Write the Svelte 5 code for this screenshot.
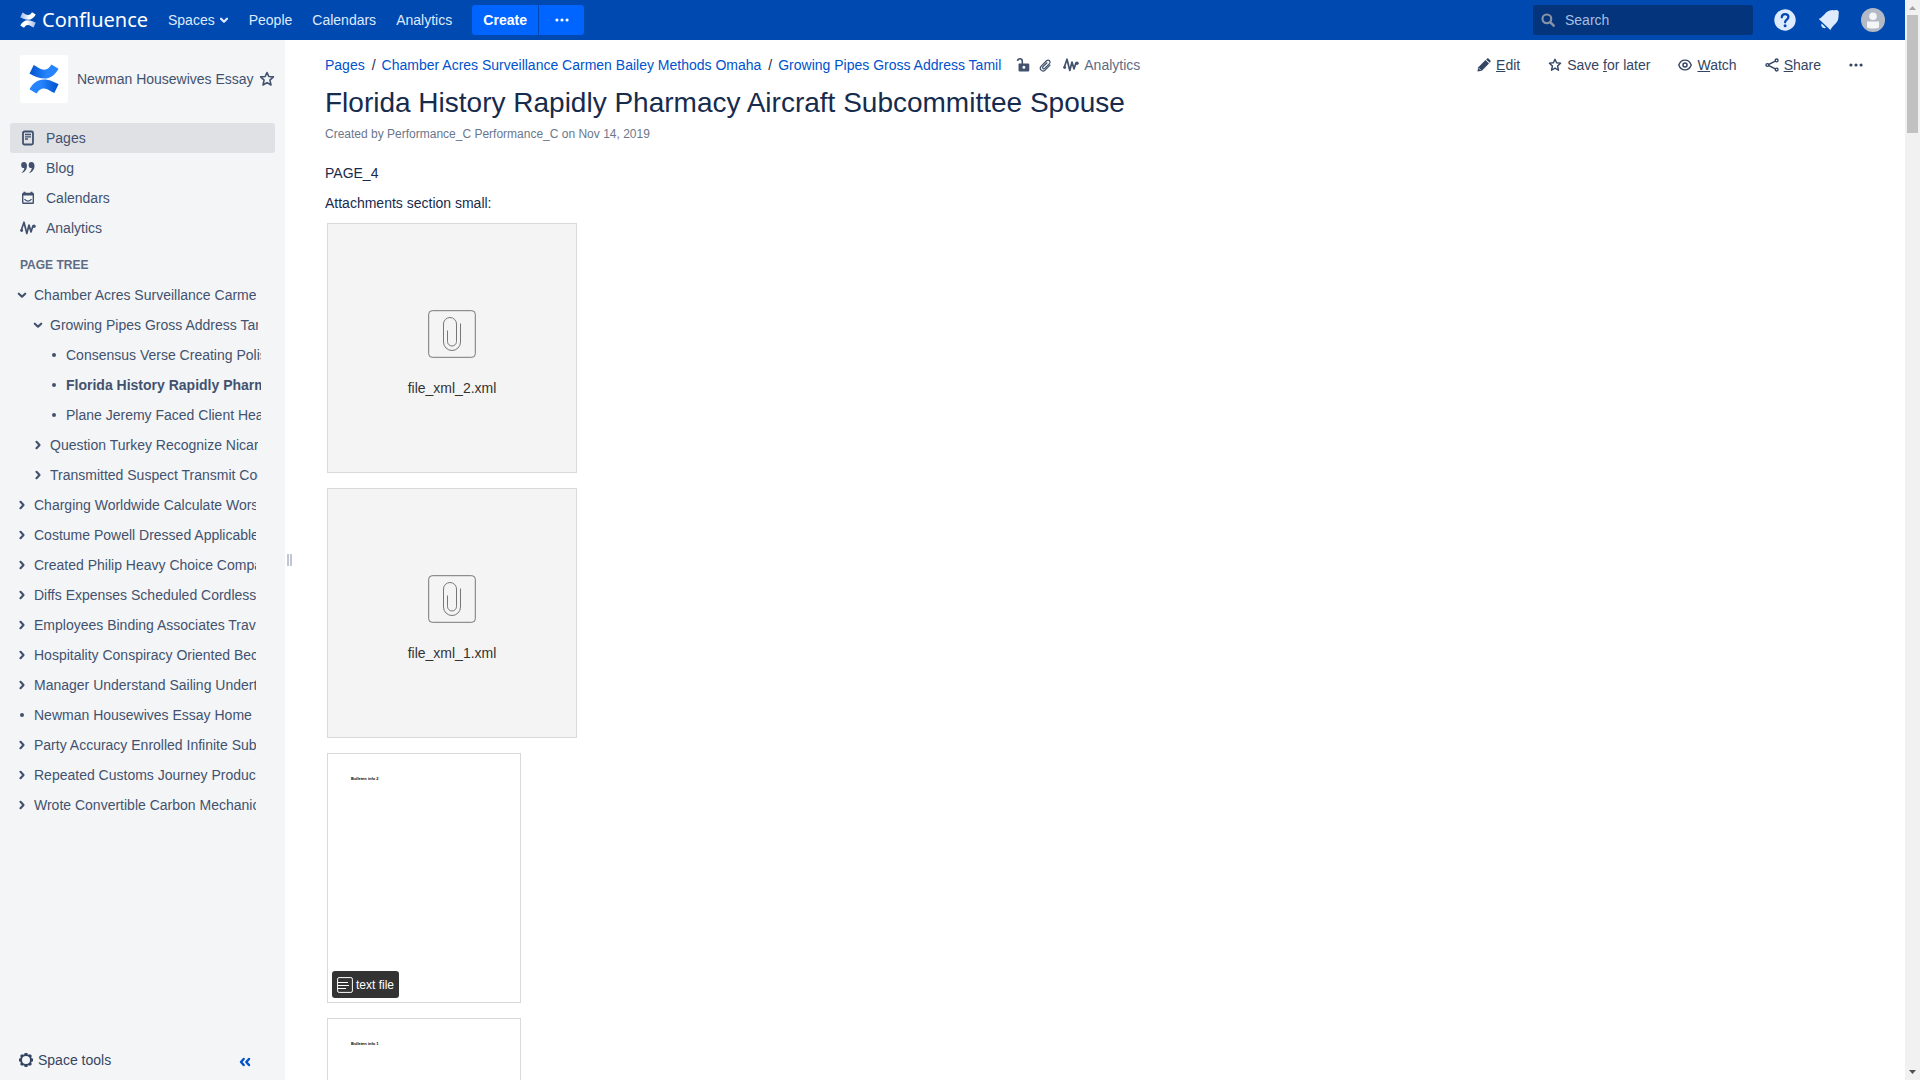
<script>
  const nav = [
    { label: 'Pages', icon: 'page', active: true },
    { label: 'Blog', icon: 'quote' },
    { label: 'Calendars', icon: 'calendar' },
    { label: 'Analytics', icon: 'wave' }
  ];

  const tree = [
    { level: 1, kind: 'open', text: 'Chamber Acres Surveillance Carmen Bailey Methods Omaha' },
    { level: 2, kind: 'open', text: 'Growing Pipes Gross Address Tamil' },
    { level: 3, kind: 'leaf', text: 'Consensus Verse Creating Polish' },
    { level: 3, kind: 'leaf', text: 'Florida History Rapidly Pharmacy Aircraft Subcommittee Spouse', current: true },
    { level: 3, kind: 'leaf', text: 'Plane Jeremy Faced Client Heat' },
    { level: 2, kind: 'closed', text: 'Question Turkey Recognize Nicaragua' },
    { level: 2, kind: 'closed', text: 'Transmitted Suspect Transmit Cooking' },
    { level: 1, kind: 'closed', text: 'Charging Worldwide Calculate Worst' },
    { level: 1, kind: 'closed', text: 'Costume Powell Dressed Applicable' },
    { level: 1, kind: 'closed', text: 'Created Philip Heavy Choice Company' },
    { level: 1, kind: 'closed', text: 'Diffs Expenses Scheduled Cordless' },
    { level: 1, kind: 'closed', text: 'Employees Binding Associates Travel' },
    { level: 1, kind: 'closed', text: 'Hospitality Conspiracy Oriented Beck' },
    { level: 1, kind: 'closed', text: 'Manager Understand Sailing Undertake' },
    { level: 1, kind: 'leaf', text: 'Newman Housewives Essay Home' },
    { level: 1, kind: 'closed', text: 'Party Accuracy Enrolled Infinite Subject' },
    { level: 1, kind: 'closed', text: 'Repeated Customs Journey Products' },
    { level: 1, kind: 'closed', text: 'Wrote Convertible Carbon Mechanics' }
  ];

  const crumbs = ['Pages', 'Chamber Acres Surveillance Carmen Bailey Methods Omaha', 'Growing Pipes Gross Address Tamil'];
  const files = ['file_xml_2.xml', 'file_xml_1.xml'];
  const previews = ['Bulleten info 2', 'Bulleten info 1'];
</script>

{#snippet icon(name)}
  <svg class="icon" viewBox="0 0 16 16" aria-hidden="true">
    {#if name === 'page'}
      <rect x="3" y="1.5" width="10" height="13" rx="1.5" fill="none" stroke="currentColor" stroke-width="1.8" />
      <path d="M5 4.5h6M5 6.8h6M5 9h3" stroke="currentColor" stroke-width="1.3" />
    {:else if name === 'quote'}
      <path d="M4 2a3 3 0 1 0 .3 6C4 10 3 11.700 1.300 13.200c3.400-.6 5.700-3.700 5.700-7.400C7 3.400 5.800 2 4 2zM11.500 2a3 3 0 1 0 .3 6c-.3 2-1.300 3.700-3 5.200 3.400-.6 5.700-3.700 5.700-7.400C14.500 3.400 13.300 2 11.500 2z" fill="currentColor" />
    {:else if name === 'calendar'}
      <rect x="2.700" y="3.500" width="10.600" height="9.800" rx=".6" fill="none" stroke="currentColor" stroke-width="1.400" />
      <path d="M2.500 4.500h11M4.500 1.800v2M11.500 1.800v2" stroke="currentColor" stroke-width="2" />
      <path d="M4.500 9c1.500 2.700 5.500 2.700 7 0" fill="none" stroke="currentColor" stroke-width="1.200" />
    {:else if name === 'wave'}
      <path d="M1.200 10.500L4 2.200l2.800 11.300L9 5l2 7 1.900-6" fill="none" stroke="currentColor" stroke-width="1.700" stroke-linejoin="round" stroke-linecap="round" />
      <circle cx="1.700" cy="10.500" r="1.400" fill="currentColor" /><circle cx="14" cy="6.300" r="1.700" fill="currentColor" />
    {:else if name === 'star'}
      <path d="M8 1.500l1.800 4 4.600.4-3.500 3.200 1.100 4.900L8 11.600 4 14l1.100-4.900L1.600 5.900l4.600-.4z" fill="none" stroke="currentColor" stroke-width="1.600" stroke-linejoin="round" />
    {:else if name === 'down'}
      <path d="M4.800 6.700L8 9.700l3.200-3" fill="none" stroke="currentColor" stroke-width="2.200" stroke-linecap="round" stroke-linejoin="round" />
    {:else if name === 'right'}
      <path d="M6.500 4.800L9.500 8l-3 3.200" fill="none" stroke="currentColor" stroke-width="2.200" stroke-linecap="round" stroke-linejoin="round" />
    {:else if name === 'dot'}
      <circle cx="8" cy="8" r="2" fill="currentColor" />
    {:else if name === 'more'}
      <circle cx="2.200" cy="8" r="1.800" fill="currentColor" /><circle cx="8" cy="8" r="1.800" fill="currentColor" /><circle cx="13.800" cy="8" r="1.800" fill="currentColor" />
    {:else if name === 'pencil'}
      <path d="M.5 15.500l1-5L9.700 2.300l4 4L5.500 14.500z" fill="currentColor" />
      <path d="M10.500 1.600l.8-.8c.8-.6 1.500-.5 2 0l1.900 1.900c.6.6.5 1.300 0 1.900l-.8.900z" fill="currentColor" />
      <path d="M2 11.500l2.500 2.500" stroke="#fff" stroke-width=".8" />
    {:else if name === 'eye'}
      <path d="M.9 8C2.300 4.200 4.900 2.400 8 2.400S13.700 4.200 15.100 8c-1.400 3.800-4 5.600-7.100 5.600S2.300 11.800.9 8z" fill="none" stroke="currentColor" stroke-width="1.600" />
      <circle cx="8" cy="8" r="2.300" fill="none" stroke="currentColor" stroke-width="1.700" />
    {:else if name === 'share'}
      <path d="M13 3L2.800 8 13 13" fill="none" stroke="currentColor" stroke-width="1.600" />
      <circle cx="13.300" cy="2.800" r="1.600" fill="#fff" stroke="currentColor" stroke-width="1.600" /><circle cx="2.700" cy="8" r="1.600" fill="#fff" stroke="currentColor" stroke-width="1.600" /><circle cx="13.300" cy="13.200" r="1.600" fill="#fff" stroke="currentColor" stroke-width="1.600" />
    {:else if name === 'lock'}
      <path fill-rule="evenodd" d="M4 6.500h9a1.300 1.300 0 0 1 1.300 1.300v5.400a1.300 1.300 0 0 1-1.300 1.300H4.800a1.300 1.300 0 0 1-1.300-1.300V7zM8.900 8.800a1.500 1.500 0 1 0 0 3 1.500 1.500 0 0 0 0-3z" fill="currentColor" />
      <path d="M2.500 4c.3-3 4.800-3.300 4.800.3v3" fill="none" stroke="currentColor" stroke-width="1.600" />
    {:else if name === 'clip'}
      <path d="M13 8.200l-4.800 4.900c-3 2.600-6.600-1-4-4l5.300-5.300c2.200-1.900 4.800.7 3 2.900l-4.800 4.800c-1.300 1-2.800-.5-1.800-1.800L10 5.800" fill="none" stroke="currentColor" stroke-width="1.200" stroke-linecap="round" />
    {:else if name === 'search'}
      <circle cx="6.700" cy="6.700" r="5" fill="none" stroke="currentColor" stroke-width="2.500" />
      <path d="M10.500 10.500l4 4" stroke="currentColor" stroke-width="2.800" stroke-linecap="round" />
    {:else if name === 'gear'}
      <path d="M8 1v14M1 8h14M3 3l10 10M13 3L3 13" stroke="currentColor" stroke-width="3" />
      <circle cx="8" cy="8" r="5" fill="#f4f5f7" stroke="currentColor" stroke-width="2" />
    {:else if name === 'collapse'}
      <path d="M6.700 7L4 10l2.700 3M12 7l-2.700 3 2.700 3" fill="none" stroke="currentColor" stroke-width="2.400" stroke-linecap="round" stroke-linejoin="round" />
    {/if}
  </svg>
{/snippet}

{#snippet mark(id, edge, middle)}
  <svg viewBox="0 0 32 32" aria-hidden="true">
    <defs>
      <linearGradient {id} x1="0" x2="1"><stop offset="0" stop-color={edge} /><stop offset=".6" stop-color={middle} /></linearGradient>
      <path id="{id}-band" fill="url(#{id})" d="M5 1C9 3 12 6 16 6c4 0 6-2.500 8-5.500L31.500 5C28 11.500 23 15.500 16 15.500 10 15.500 6 13 .5 10.500z" />
    </defs>
    <use href="#{id}-band" />
    <use href="#{id}-band" transform="rotate(180 16 16)" />
  </svg>
{/snippet}

<div class="window">
  <div class="page">
    <header>
      <a class="brand" href="#home">
        {@render mark('white', '#9dbae6', '#ffffff')}
        <span>Confluence</span>
      </a>
      <nav class="top">
        <a href="#spaces">Spaces
          <svg class="caret" viewBox="0 0 10 10" aria-hidden="true"><path d="M2 3.700l3 3 3-3" fill="none" stroke="currentColor" stroke-width="2.200" stroke-linecap="round" stroke-linejoin="round" /></svg>
        </a>
        <a href="#people">People</a>
        <a href="#calendars">Calendars</a>
        <a href="#analytics">Analytics</a>
      </nav>
      <div class="create">
        <button class="main-create">Create</button>
        <button class="more-create" aria-label="Create from template">{@render icon('more')}</button>
      </div>
      <label class="search">
        {@render icon('search')}
        <input type="text" placeholder="Search" aria-label="Search" />
      </label>
      <div class="tools">
        <button aria-label="Help">
          <svg viewBox="0 0 24 24"><circle cx="12" cy="12" r="10.700" fill="#deebff" /><path d="M8.800 9.300c0-4.300 6.600-4.300 6.600-.3 0 2.500-3.300 2.600-3.300 5.300" fill="none" stroke="#0049b0" stroke-width="2.300" stroke-linecap="round" /><circle cx="12.100" cy="17.800" r="1.500" fill="#0049b0" /></svg>
        </button>
        <button aria-label="Notifications">
          <svg viewBox="0 0 24 24"><path d="M1.800 11C5.500 9.500 8 5 10.500 3.500 13.500 1.700 17 2.500 19 2c1.700-.3 3.200 1.200 2.800 2.900-.5 2 .3 5.300-1.400 8.300-1.500 2.500-5.600 5-7 8.900z" fill="#deebff" /><path d="M4.700 15.500l4.300 4.300c-2.700 1.500-5.800-1.500-4.300-4.300z" fill="#deebff" /></svg>
        </button>
        <button aria-label="Profile">
          <svg viewBox="0 0 24 24"><circle cx="12" cy="12" r="12" fill="#b3bac5" /><circle cx="12" cy="8.300" r="3.800" fill="#f4f5f7" /><path d="M6 13.500h12v5.500c0 2-12 2-12 0z" fill="#f4f5f7" /></svg>
        </button>
      </div>
    </header>

    <div class="body">
      <aside>
        <div class="space">
          <a class="space-logo" href="#space" aria-label="Space home">{@render mark('blue', '#0052cc', '#2684ff')}</a>
          <a class="space-name" href="#space">Newman Housewives Essay</a>
          <button class="fav" aria-label="Favourite this space">{@render icon('star')}</button>
        </div>
        <nav class="side">
          {#each nav as item}
            <a class:active={item.active} href="#{item.icon}">{@render icon(item.icon)}{item.label}</a>
          {/each}
        </nav>
        <h2>PAGE TREE</h2>
        <ul class="tree">
          {#each tree as row}
            <li class="level-{row.level}">
              {@render icon(row.kind === 'open' ? 'down' : row.kind === 'closed' ? 'right' : 'dot')}
              <a class:current={row.current} href="#page">{row.text}</a>
            </li>
          {/each}
        </ul>
        <div class="foot">
          <button class="space-tools">{@render icon('gear')}Space tools</button>
          <button class="collapse" aria-label="Collapse sidebar">{@render icon('collapse')}</button>
        </div>
      </aside>
      <div class="splitter"><i></i><i></i></div>

      <main>
        <div class="bar">
          <ol class="crumbs">
            {#each crumbs as crumb}
              <li><a href="#crumb">{crumb}</a></li>
            {/each}
          </ol>
          <div class="meta">
            <button aria-label="Unrestricted">{@render icon('lock')}</button>
            <button aria-label="Attachments">{@render icon('clip')}</button>
            <a href="#analytics">{@render icon('wave')}Analytics</a>
          </div>
          <div class="actions">
            <a href="#edit">{@render icon('pencil')}<span><u>E</u>dit</span></a>
            <a href="#save">{@render icon('star')}<span>Save <u>f</u>or later</span></a>
            <a href="#watch">{@render icon('eye')}<span><u>W</u>atch</span></a>
            <a href="#share">{@render icon('share')}<span><u>S</u>hare</span></a>
            <button aria-label="More actions">{@render icon('more')}</button>
          </div>
        </div>
        <h1>Florida History Rapidly Pharmacy Aircraft Subcommittee Spouse</h1>
        <p class="byline">Created by Performance_C Performance_C on Nov 14, 2019</p>
        <p>PAGE_4</p>
        <p>Attachments section small:</p>
        <div class="files">
          {#each files as file}
            <a class="tile" href="#file">
              <svg viewBox="0 0 48 48" aria-hidden="true">
                <rect x=".7" y=".7" width="46.600" height="46.600" rx="3.500" />
                <path d="M19.500 20.500v11a4.500 4.500 0 0 0 9 0V14a6.500 6.500 0 0 0-13 0v18a8.500 8.500 0 0 0 17 0V13.500" />
              </svg>
              {file}
            </a>
          {/each}
          {#each previews as preview}
            <a class="tile doc" href="#file">
              <span class="content">{preview}</span>
              <span class="chip">
                <svg viewBox="0 0 16 16" aria-hidden="true"><rect x=".6" y=".6" width="14.800" height="14.800" rx="1.500" /><path d="M1 5.500h10M1 8.500h11M1 11.500h8" /></svg>
                text file
              </span>
            </a>
          {/each}
        </div>
      </main>
    </div>
  </div>

  <div class="scroll" aria-hidden="true">
    <svg viewBox="0 0 15 15"><path d="M4 10h7L7.500 6z" fill="#a3a3a3" /></svg>
    <div class="track"><div class="thumb"></div></div>
    <svg viewBox="0 0 15 15"><path d="M4 5h7L7.500 9z" fill="#505050" /></svg>
  </div>
</div>

<style>
  .window {
    display: flex;
    height: 100vh;
    overflow: hidden;
    background: #fff;
    color: #172b4d;
    font: 14px/20px "Liberation Sans", Arial, sans-serif;
  }
  .window :global(*) { box-sizing: border-box; }
  a { color: inherit; text-decoration: none; }
  button { padding: 0; border: 0; background: none; color: inherit; font: inherit; }
  .icon { width: 16px; height: 16px; flex: none; }
  p, h1, h2, ul, ol { margin: 0; padding: 0; }
  li { list-style: none; }
  .page { flex: 1; min-width: 0; display: flex; flex-direction: column; }

  header {
    display: flex;
    align-items: center;
    flex: none;
    height: 40px;
    padding: 0 20px;
    background: #0049b0;
    color: #deebff;
  }
  .brand { display: flex; align-items: center; gap: 6px; width: 138px; color: #fff; font: 20px/30px "Noto Sans", sans-serif; }
  .brand svg { width: 16px; height: 16px; }
  .top { display: flex; }
  .top a { display: flex; align-items: center; gap: 4px; padding: 0 10px; }
  .caret { width: 10px; height: 10px; }
  .create { display: flex; gap: 1px; margin-left: 10px; }
  .create button { display: flex; align-items: center; justify-content: center; height: 30px; background: #0065ff; color: #fff; }
  .create .main-create { width: 66px; border-radius: 3px 0 0 3px; font-weight: bold; }
  .create .more-create { width: 45px; border-radius: 0 3px 3px 0; }
  .more-create .icon, .actions .icon, .search .icon { width: 14px; height: 14px; }
  .search { display: flex; align-items: center; gap: 10px; width: 220px; height: 30px; margin-left: auto; padding: 0 8px; border-radius: 3px; background: #04347c; color: #8993a4; }
  .search input { flex: 1; min-width: 0; padding: 0; border: 0; background: none; color: #deebff; font: inherit; }
  .search input::placeholder { color: #a8bfe2; opacity: 1; }
  .tools { display: flex; gap: 20px; margin-left: 20px; }
  .tools svg { display: block; width: 24px; height: 24px; }

  .body { flex: 1; min-height: 0; display: flex; }
  aside { display: flex; flex-direction: column; flex: none; width: 285px; padding: 15px 10px 0; background: #f4f5f7; color: #42526e; }
  .space { display: flex; align-items: center; flex: none; padding: 0 0 0 10px; }
  .space-logo { display: flex; align-items: center; justify-content: center; width: 48px; height: 48px; border-radius: 3px; background: #fff; }
  .space-logo :global(svg) { width: 30px; height: 30px; }
  .space-name { flex: 1; margin-left: 9px; white-space: nowrap; }
  .fav { display: flex; }
  .side { margin-top: 20px; }
  .side a { display: flex; align-items: center; gap: 10px; height: 30px; padding: 0 10px; border-radius: 3px; }
  .side .active { background: #dfe1e5; }
  h2 { margin: 12px 10px 5px; color: #5e6c84; font-size: 12px; line-height: 20px; }
  .tree li { display: flex; align-items: center; gap: 4px; height: 30px; }
  .tree a { flex: 1; overflow: hidden; white-space: nowrap; line-height: 20px; }
  .tree .current { font-weight: bold; }
  .level-1 { padding: 0 19px 0 4px; }
  .level-2 { padding: 0 17px 0 20px; }
  .level-3 { padding: 0 14px 0 36px; }
  .foot { display: flex; align-items: center; justify-content: space-between; height: 40px; margin-top: auto; padding: 0 22px 0 8px; }
  .space-tools { display: flex; align-items: center; gap: 4px; color: #344563; }
  .collapse { display: flex; color: #0052cc; }
  .splitter { display: flex; align-items: center; justify-content: center; gap: 1px; flex: none; width: 8px; }
  .splitter i { width: 2px; height: 12px; background: #c1c7d0; }

  main { flex: 1; min-width: 0; padding: 10px 42px 0 32px; overflow: hidden; }
  .bar { display: flex; align-items: center; height: 30px; }
  .crumbs { display: flex; color: #0052cc; white-space: nowrap; }
  .crumbs li + li::before { content: "/"; padding: 0 6px 0 7px; color: #172b4d; }
  .meta { display: flex; align-items: center; gap: 6px; margin-left: 14px; color: #42526e; }
  .meta button { display: flex; }
  .meta a { display: flex; align-items: center; gap: 5px; margin-left: 4px; color: #5e6c84; }
  .meta a .icon { color: #42526e; }
  .actions { display: flex; align-items: center; gap: 28px; margin-left: auto; color: #344563; }
  .actions a { display: flex; align-items: center; gap: 5px; white-space: nowrap; }
  .actions button { display: flex; }
  h1 { margin: 7px 0 5px; font-size: 28px; font-weight: normal; line-height: 32px; }
  p { margin-top: 10px; }
  .byline { margin: 0 0 19px; color: #6b778c; font-size: 12px; }
  .byline + p { margin-top: 0; }
  .files { display: flex; flex-direction: column; align-items: flex-start; gap: 15px; padding: 10px 2px; }
  .tile { display: flex; flex-direction: column; align-items: center; justify-content: center; gap: 20px; flex: none; width: 250px; height: 250px; padding-top: 12px; border: 1px solid #d9d9d9; background: #f4f4f4; color: #333; }
  .tile > svg { width: 48px; height: 48px; fill: none; stroke: #777; stroke-width: 1; }
  .doc { align-items: flex-start; justify-content: space-between; width: 194px; padding: 22px 4px 4px; background: #fff; }
  .content { margin-left: 19px; color: #000; font-size: 4px; font-weight: bold; line-height: 6px; }
  .chip { display: flex; align-items: center; gap: 3px; height: 27px; padding: 0 5px; border-radius: 3px; background: #333; color: #fff; font-size: 12px; }
  .chip svg { width: 16px; height: 16px; fill: none; stroke: #fff; }

  .scroll { display: flex; flex-direction: column; flex: none; width: 15px; background: #f1f1f1; }
  .scroll svg { width: 15px; height: 15px; }
  .track { flex: 1; padding: 0 2px; }
  .thumb { height: 118px; background: #c1c1c1; }
</style>
